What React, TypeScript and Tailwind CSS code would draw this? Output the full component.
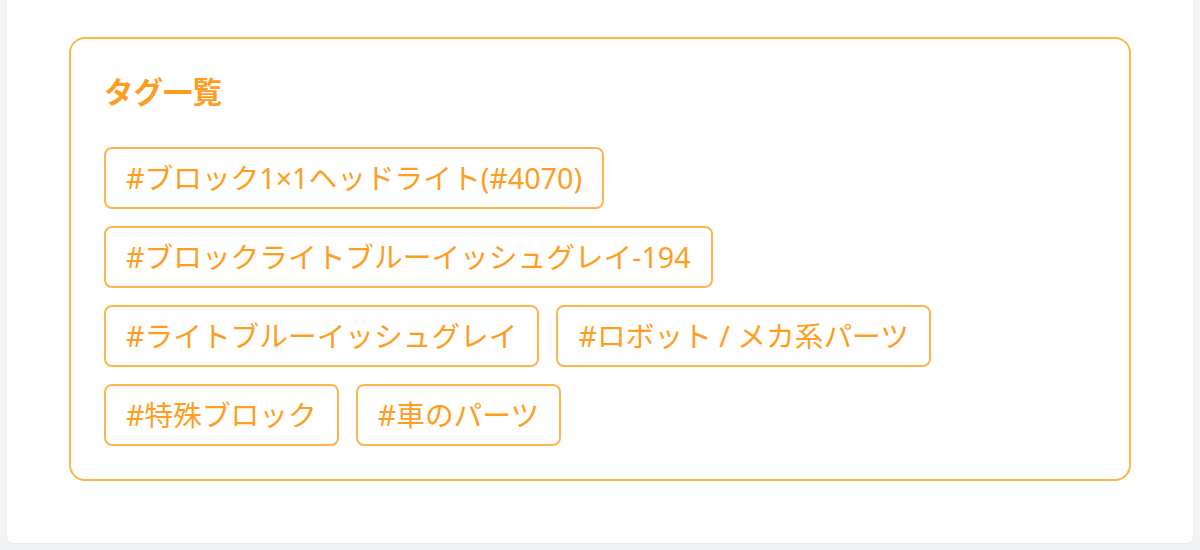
const tags = [
  '#ブロック1×1ヘッドライト(#4070)',
  '#ブロックライトブルーイッシュグレイ-194',
  '#ライトブルーイッシュグレイ',
  '#ロボット / メカ系パーツ',
  '#特殊ブロック',
  '#車のパーツ',
];

export default function App() {
  return (
    <div
      className="h-[550px] w-full bg-[#f2f3f5] px-[7px]"
      style={{ fontFamily: '"Noto Sans", "Noto Sans CJK JP", sans-serif' }}
    >
      <div className="h-[543px] rounded-b-md bg-white px-[62px] pt-[37px] shadow-[0_1px_2px_rgba(0,0,0,0.06)]">
        <div className="h-[444px] rounded-[16px] border-2 border-[#ffb54e] px-[33px] pt-[33px]">
          <h2 className="mb-[35px] h-[40px] text-[29.5px] leading-[40px] font-bold text-[#ff9d1f]">
            タグ一覧
          </h2>
          <div className="flex flex-wrap gap-[17px]">
            {tags.map((t) => (
              <span
                key={t}
                className="flex h-[62px] items-center rounded-[8px] border-2 border-[#ffb54e] px-[20px] text-[28.7px] text-[#ff9d1f]"
              >
                {t}
              </span>
            ))}
          </div>
        </div>
      </div>
    </div>
  );
}
